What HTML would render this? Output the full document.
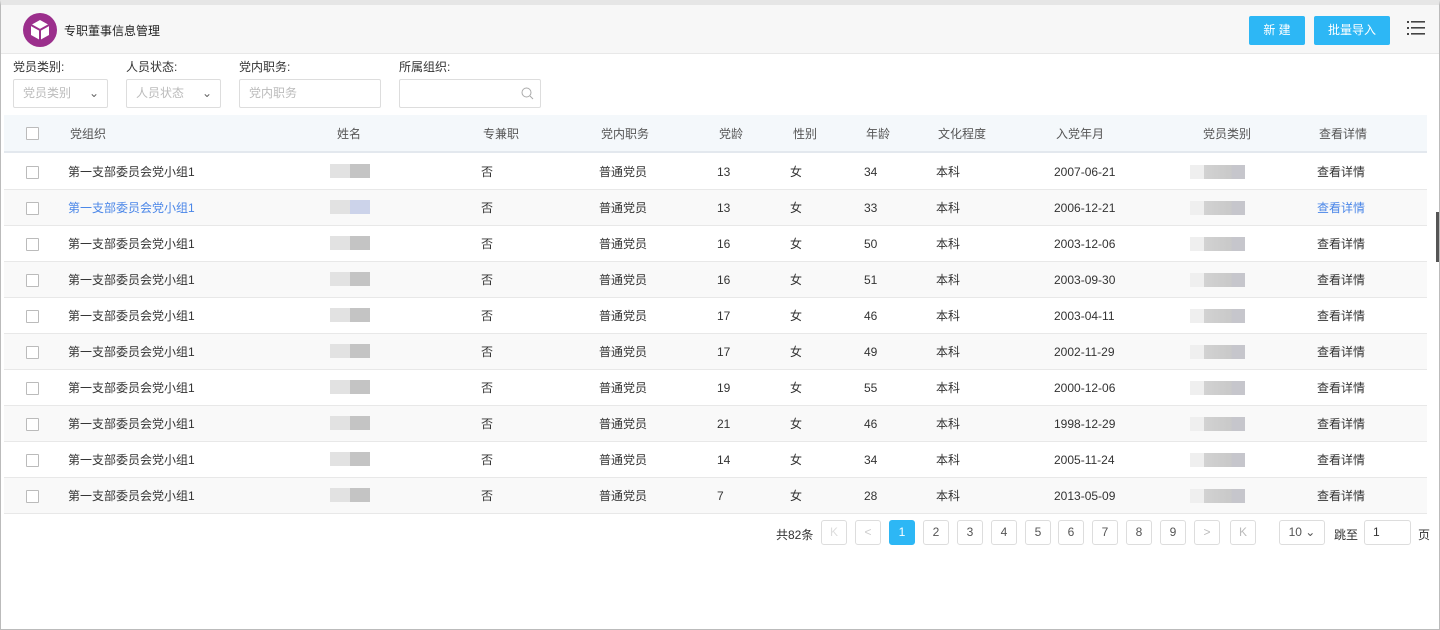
<!DOCTYPE html><html><head><meta charset="utf-8"><style>
*{margin:0;padding:0;box-sizing:border-box}
body{width:1440px;height:630px;background:#fff;font-family:"Liberation Sans","Noto Sans CJK SC",sans-serif;font-size:12px;color:#333;position:relative;overflow:hidden}
.frame{position:absolute;left:0;top:0;width:1440px;height:630px;border:1px solid #bbb;border-top:5px solid #e6e6e6}
.hdr{position:absolute;left:1px;top:5px;width:1438px;height:49px;background:#f7f7f7;border-bottom:1px solid #e8e8e8}
.a{position:absolute;white-space:nowrap;line-height:14px}
.btn{position:absolute;top:16px;height:29px;background:#2db7f5;color:#fff;text-align:center;line-height:29px;font-size:12px;border-radius:2px}
.lbl{position:absolute;top:60px;font-size:12px;color:#333;line-height:14px}
.inp{position:absolute;top:79px;height:29px;border:1px solid #ddd;border-radius:2px;color:#bbb;line-height:27px;padding-left:9px;font-size:12px}
.th{position:absolute;left:4px;top:115px;width:1423px;height:38px;background:#f4f8fb;border-bottom:2px solid #e3e8ee}
.row{position:absolute;left:4px;width:1423px;height:36px;border-bottom:1px solid #e8e8e8}
.cb{position:absolute;left:26px;width:13px;height:13px;border:1px solid #bbb;background:#fff;border-radius:1px}
.blur{position:absolute;width:40px;height:14px}
.pg{position:absolute;top:520px;width:26px;height:25px;border:1px solid #ddd;border-radius:3px;text-align:center;line-height:23px;color:#555;background:#fff}
</style></head><body>
<div class="frame"></div>
<div class="hdr"></div>
<svg class="a" style="left:23px;top:13px" width="34" height="34" viewBox="0 0 34 34"><circle cx="17" cy="17" r="17" fill="#9b2f8c"/><path d="M17 7 L26 12 L26 22 L17 27 L8 22 L8 12 Z" fill="#fff"/><path d="M8 12 L17 17 L26 12 M17 17 L17 27" stroke="#9b2f8c" stroke-width="2" fill="none"/></svg>
<div class="a" style="left:64px;top:24px;font-size:12px;color:#222">专职董事信息管理</div>
<div class="btn" style="left:1249px;width:56px">新 建</div>
<div class="btn" style="left:1314px;width:76px">批量导入</div>
<svg class="a" style="left:1407px;top:21px" width="18" height="15"><g fill="#444"><rect x="0" y="0" width="2" height="2"/><rect x="0" y="6" width="2" height="2"/><rect x="0" y="12" width="2" height="2"/><rect x="4" y="0" width="14" height="1.6"/><rect x="4" y="6" width="14" height="1.6"/><rect x="4" y="12" width="14" height="1.6"/></g></svg>
<div class="lbl" style="left:13px">党员类别:</div>
<div class="lbl" style="left:126px">人员状态:</div>
<div class="lbl" style="left:239px">党内职务:</div>
<div class="lbl" style="left:399px">所属组织:</div>
<div class="inp" style="left:13px;width:95px">党员类别<span style="position:absolute;right:8px;color:#666">⌄</span></div>
<div class="inp" style="left:126px;width:95px">人员状态<span style="position:absolute;right:8px;color:#666">⌄</span></div>
<div class="inp" style="left:239px;width:142px">党内职务</div>
<div class="inp" style="left:399px;width:142px"><svg style="position:absolute;right:6px;top:7px" width="13" height="13"><circle cx="5.5" cy="5.5" r="4.5" stroke="#aaa" fill="none"/><path d="M9 9 L12 12" stroke="#aaa"/></svg></div>
<div class="th"></div>
<div class="cb" style="top:127px"></div>
<div class="a" style="top:127px;left:70px;color:#555">党组织</div>
<div class="a" style="top:127px;left:337px;color:#555">姓名</div>
<div class="a" style="top:127px;left:483px;color:#555">专兼职</div>
<div class="a" style="top:127px;left:601px;color:#555">党内职务</div>
<div class="a" style="top:127px;left:719px;color:#555">党龄</div>
<div class="a" style="top:127px;left:793px;color:#555">性别</div>
<div class="a" style="top:127px;left:866px;color:#555">年龄</div>
<div class="a" style="top:127px;left:938px;color:#555">文化程度</div>
<div class="a" style="top:127px;left:1056px;color:#555">入党年月</div>
<div class="a" style="top:127px;left:1203px;color:#555">党员类别</div>
<div class="a" style="top:127px;left:1319px;color:#555">查看详情</div>
<div id="rows"></div>
<script>
var d=[["13","女","34","2007-06-21"],["13","女","33","2006-12-21"],["16","女","50","2003-12-06"],["16","女","51","2003-09-30"],["17","女","46","2003-04-11"],["17","女","49","2002-11-29"],["19","女","55","2000-12-06"],["21","女","46","1998-12-29"],["14","女","34","2005-11-24"],["7","女","28","2013-05-09"]];
var h="";
d.forEach(function(r,i){var t=154+i*36,c=t+11,bl=i==1?"#4a86e8":"#333";
h+='<div class="row" style="top:'+t+'px;background:'+(i%2?"#f9f9f9":"#fff")+'"></div>';
h+='<div class="cb" style="top:'+(t+12)+'px"></div>';
h+='<div class="a" style="top:'+c+'px;left:68px;color:'+bl+'">第一支部委员会党小组1</div>';
h+='<div class="blur" style="top:'+(t+10)+'px;left:330px;background:linear-gradient(90deg,#e2e2e2 50%,'+(i==1?"#ccd3ea":"#c4c4c4")+' 50%)"></div>';
h+='<div class="a" style="top:'+c+'px;left:481px">否</div>';
h+='<div class="a" style="top:'+c+'px;left:599px">普通党员</div>';
h+='<div class="a" style="top:'+c+'px;left:717px">'+r[0]+'</div>';
h+='<div class="a" style="top:'+c+'px;left:790px">'+r[1]+'</div>';
h+='<div class="a" style="top:'+c+'px;left:864px">'+r[2]+'</div>';
h+='<div class="a" style="top:'+c+'px;left:936px">本科</div>';
h+='<div class="a" style="top:'+c+'px;left:1054px">'+r[3]+'</div>';
h+='<div class="blur" style="top:'+(t+11)+'px;left:1190px;width:55px;background:linear-gradient(90deg,#efefef 25%,#d2d2d2 25%,#c9c9c9 75%,#c6c6cc 75%)"></div>';
h+='<div class="a" style="top:'+c+'px;left:1317px;color:'+bl+'">查看详情</div>';});
document.getElementById("rows").innerHTML=h;
</script>
<div class="a" style="top:528px;left:776px">共82条</div>
<div class="pg" style="left:821px;color:#ddd">K</div>
<div class="pg" style="left:855px;color:#ccc">&lt;</div>
<div class="pg" style="left:889px;background:#2db7f5;border-color:#2db7f5;color:#fff">1</div>
<div class="pg" style="left:923px">2</div>
<div class="pg" style="left:957px">3</div>
<div class="pg" style="left:991px">4</div>
<div class="pg" style="left:1025px">5</div>
<div class="pg" style="left:1058px">6</div>
<div class="pg" style="left:1092px">7</div>
<div class="pg" style="left:1126px">8</div>
<div class="pg" style="left:1160px">9</div>
<div class="pg" style="left:1194px;color:#bbb">&gt;</div>
<div class="pg" style="left:1230px;color:#bbb">K</div>
<div class="pg" style="left:1279px;width:46px">10 ⌄</div>
<div class="a" style="top:528px;left:1334px">跳至</div>
<div class="pg" style="left:1364px;width:47px;text-align:left;padding-left:8px;color:#333">1</div>
<div class="a" style="top:528px;left:1418px">页</div>
<div class="a" style="left:1436px;top:212px;width:3px;height:50px;background:#555"></div>
</body></html>
